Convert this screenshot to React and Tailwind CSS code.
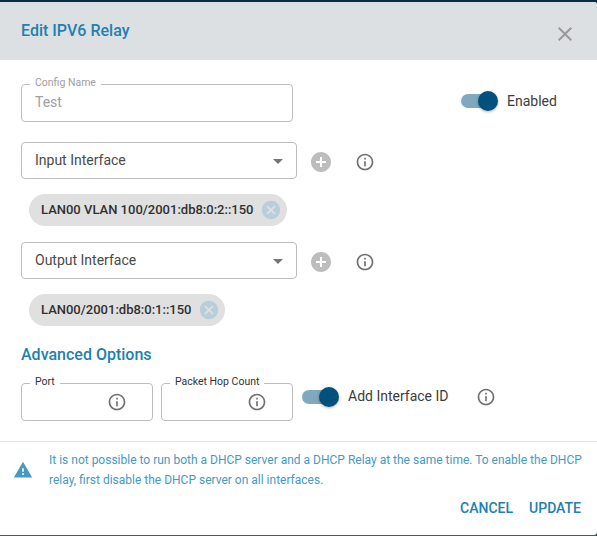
import React from "react";
import { MdAddCircle, MdCancel, MdClose, MdInfoOutline, MdWarning } from "react-icons/md";

function Toggle({ label, labelClass = "" }) {
  return (
    <label className="flex items-center">
      <span className="flex h-[14px] w-9 items-center justify-end rounded-full bg-[#80a8be]">
        <span className="-mr-px h-5 w-5 shrink-0 rounded-full bg-[#00527d] shadow-[0_1px_3px_rgba(0,0,0,0.3)]" />
      </span>
      <span className={`ml-[10px] text-[14px] leading-5 text-[#3c3c3c] ${labelClass}`}>{label}</span>
    </label>
  );
}

function OutlinedField({ label, className, labelClass, children }) {
  return (
    <fieldset className={`h-[44px] min-w-0 rounded-[4px] border border-[#bdbdbd] pl-[8px] ${className}`}>
      <legend className={`h-[12px] px-[5px] text-[10.5px] leading-[10px] whitespace-nowrap ${labelClass}`}>{label}</legend>
      {children}
    </fieldset>
  );
}

function InterfaceSelect({ label, chip, chipClass }) {
  return (
    <section className="h-[100px]">
      <div className="flex items-center">
        <div className="flex h-[37px] w-[276px] items-center justify-between rounded-[4px] border border-[#bdbdbd] pr-[13px] pl-[13px]">
          <span className="text-[14px] text-[#4a4a4a]">{label}</span>
          <span className="mt-[2px] h-0 w-0 border-x-[5px] border-t-[5px] border-x-transparent border-t-[#757575]" />
        </div>
        <MdAddCircle className="mt-[2px] ml-[12px] h-6 w-6 text-[#bdbdbd]" />
        <MdInfoOutline className="mt-[2px] ml-[22px] h-5 w-5 text-[#707070]" />
      </div>
      <div className={`mt-[15px] ml-2 flex h-8 items-center justify-between rounded-full bg-[#e0e0e0] pr-[5px] pl-3 ${chipClass}`}>
        <span className="text-[13px] font-medium whitespace-nowrap text-[#303030]">{chip}</span>
        <MdCancel className="h-[22px] w-[22px] shrink-0 text-[#b8ced8]" />
      </div>
    </section>
  );
}

export default function App() {
  return (
    <div className="flex h-[537px] w-[597px] flex-col bg-[#062c3d] pt-[2px] font-[Roboto,sans-serif]">
      <main className="flex h-[533px] flex-col overflow-hidden rounded-r-[3px] bg-white">
        <header className="flex h-[58px] shrink-0 items-center justify-between bg-[#dce0e3] pr-5 pl-[21px]">
          <h1 className="text-[16px] font-medium text-[#2180b1]">Edit IPV6 Relay</h1>
          <MdClose className="mt-[6px] h-6 w-6 text-[#999]" />
        </header>
        <div className="h-[381px] shrink-0 pt-[18px] pl-[21px]">
          <div className="flex h-[64px]">
            <OutlinedField label="Config Name" className="w-[272px]" labelClass="text-[#a0a0a0]">
              <div className="ml-[5px] pt-px text-[14px] leading-[22px] text-[#a0a0a0]">Test</div>
            </OutlinedField>
            <div className="mt-[13px] ml-[168px] h-5"><Toggle label="Enabled" /></div>
          </div>
          <InterfaceSelect label="Input Interface" chip="LAN00 VLAN 100/2001:db8:0:2::150" chipClass="w-[258px]" />
          <InterfaceSelect label="Output Interface" chip="LAN00/2001:db8:0:1::150" chipClass="w-[196px]" />
          <h2 className="h-[35px] pt-px text-[16px] leading-6 font-medium text-[#2180b1]">Advanced Options</h2>
          <div className="flex h-[44px]">
            <OutlinedField label="Port" className="w-[132px]" labelClass="text-[#333]">
              <MdInfoOutline className="mt-[3px] ml-[77px] h-5 w-5 text-[#707070]" />
            </OutlinedField>
            <OutlinedField label="Packet Hop Count" className="ml-2 w-[132px]" labelClass="text-[#333]">
              <MdInfoOutline className="mt-[3px] ml-[77px] h-5 w-5 text-[#707070]" />
            </OutlinedField>
            <div className="mt-[10px] ml-[9px] flex h-5 items-center">
              <Toggle label="Add Interface ID" labelClass="-mt-[2px]" />
              <MdInfoOutline className="ml-[27px] h-5 w-5 text-[#707070]" />
            </div>
          </div>
        </div>
        <footer className="flex-1 border-t border-[#e0e0e0] text-[#4799bf]">
          <div className="flex pt-[8px] pl-[13px]">
            <MdWarning className="mt-[10px] h-5 w-5 shrink-0" />
            <p className="ml-[16px] text-[12px] leading-5 whitespace-nowrap">
              It is not possible to run both a DHCP server and a DHCP Relay at the same time. To enable the DHCP<br />
              relay, first disable the DHCP server on all interfaces.
            </p>
          </div>
          <div className="mt-[8px] flex justify-end gap-4 pr-4 text-[14px] leading-5 font-medium text-[#2180b1]">
            <button>CANCEL</button>
            <button>UPDATE</button>
          </div>
        </footer>
      </main>
      <div className="h-[1px] shrink-0 bg-[#555]" />
      <div className="h-[1px] shrink-0 bg-white" />
    </div>
  );
}
